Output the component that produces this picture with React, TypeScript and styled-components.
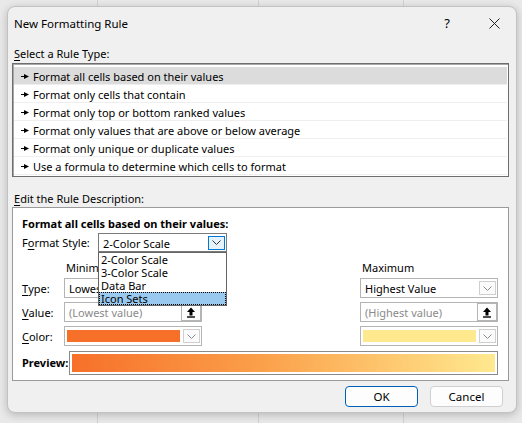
import React from "react";
import styled, { createGlobalStyle } from "styled-components";

const GlobalStyle = createGlobalStyle`
  html, body {
    margin: 0;
    padding: 0;
  }
  body {
    font-family: "Noto Sans", "Open Sans", sans-serif;
    font-size: 11px;
    color: #000;
    background: #e9e9e9;
  }
`;

const Page = styled.div`
  width: 522px;
  height: 423px;
  box-sizing: border-box;
  padding: 6px 5px 10px 7px;
  background-color: #e9e9e9;
  background-image: linear-gradient(#d2d2d2, #d2d2d2), linear-gradient(#d2d2d2, #d2d2d2),
    linear-gradient(#d2d2d2, #d2d2d2);
  background-size: 1px 100%, 1px 100%, 1px 100%;
  background-position: 97px 0, 258px 0, 403px 0;
  background-repeat: no-repeat;
`;

const Dialog = styled.div`
  width: 510px;
  height: 407px;
  box-sizing: border-box;
  background: #f0f0f0;
  border: 1px solid #c2c2c2;
  border-radius: 8px;
  box-shadow: 0 2px 8px rgba(0, 0, 0, 0.22);
  display: flex;
  flex-direction: column;
`;

const TitleBar = styled.div`
  height: 30px;
  display: flex;
  align-items: center;
  padding-left: 6px;
  padding-top: 1px;
`;

const Title = styled.div`
  flex: 1;
  font-size: 11.5px;
`;

const HelpButton = styled.div`
  width: 30px;
  text-align: center;
  font-size: 13px;
  margin-right: 10px;
`;

const CloseButton = styled.div`
  width: 44px;
  height: 30px;
  display: flex;
  align-items: center;
  justify-content: center;
`;

const Body = styled.div`
  flex: 1;
  display: flex;
  flex-direction: column;
  padding: 0 7px 0 4px;
`;

const SectionLabel = styled.div<{ $top: number }>`
  line-height: 16px;
  padding-top: 1px;
  margin-top: ${(p) => p.$top}px;
  padding-left: 2px;
`;

const Key = styled.span`
  text-decoration: underline;
  text-underline-offset: 2px;
`;

const RuleList = styled.div`
  height: 114px;
  box-sizing: border-box;
  background: #fff;
  border: 1px solid #6e6e6e;
  box-shadow: inset 1px 1px 0 #a8a8a8;
  padding: 3px 1px 1px 1px;
  margin-top: 1px;
`;

const RuleRow = styled.div<{ $selected?: boolean }>`
  height: 18px;
  box-sizing: border-box;
  display: flex;
  align-items: center;
  gap: 4px;
  padding: 1px 0 0 7px;
  background: ${(p) => (p.$selected ? "#dcdcdc" : "transparent")};
  border-bottom: 1px solid #efefef;
`;

const DescBox = styled.div`
  height: 174px;
  box-sizing: border-box;
  background: #fff;
  border: 1px solid #9a9a9a;
  padding: 7px 10px 5px 9px;
  display: flex;
  flex-direction: column;
`;

const Heading = styled.div`
  font-weight: 700;
  line-height: 16px;
  padding-top: 1px;
`;

const StyleRow = styled.div`
  display: flex;
  margin-top: 1px;
`;

const InlineLabel = styled.div<{ $width: number; $bold?: boolean }>`
  width: ${(p) => p.$width}px;
  flex-shrink: 0;
  font-weight: ${(p) => (p.$bold ? 700 : 400)};
  line-height: 14px;
  display: flex;
  align-items: center;
  white-space: nowrap;
`;

const SelectWrap = styled.div`
  position: relative;
  width: 129px;
`;

const Field = styled.div<{ $height?: number; $focus?: boolean }>`
  height: ${(p) => p.$height ?? 20}px;
  box-sizing: border-box;
  background: #fff;
  border: 1px solid ${(p) => (p.$focus ? "#7a7a7a" : "#b4b4b4")};
  display: flex;
  align-items: center;
  padding: 1px;
`;

const FieldText = styled.div<{ $muted?: boolean }>`
  flex: 1;
  padding: 1px 0 0 3px;
  color: ${(p) => (p.$muted ? "#8a8a8a" : "#000")};
  white-space: nowrap;
  overflow: hidden;
`;

const ChevronButton = styled.div<{ $active?: boolean }>`
  width: 17px;
  height: 14px;
  box-sizing: border-box;
  border: 1px solid ${(p) => (p.$active ? "#0078d4" : "#cfcfcf")};
  background: ${(p) => (p.$active ? "#e5f1fb" : "#fbfbfb")};
  display: flex;
  align-items: center;
  justify-content: center;
`;

const RefButton = styled.div`
  width: 20px;
  height: 18px;
  margin: -1px -1px -1px 0;
  box-sizing: border-box;
  border: 1px solid #b4b4b4;
  background: #fdfdfd;
  display: flex;
  align-items: center;
  justify-content: center;
`;

const Swatch = styled.div<{ $color: string }>`
  flex: 1;
  align-self: stretch;
  margin: 2px 3px 2px 1px;
  background: ${(p) => p.$color};
`;

const DropList = styled.div`
  position: absolute;
  top: 19px;
  left: 0;
  width: 129px;
  box-sizing: border-box;
  background: #fff;
  border: 1px solid #646464;
  z-index: 2;
`;

const DropItem = styled.div<{ $hot?: boolean }>`
  height: 13px;
  line-height: 13px;
  box-sizing: border-box;
  padding-left: 2px;
  background: ${(p) => (p.$hot ? "#99c9ef" : "transparent")};
  outline: ${(p) => (p.$hot ? "1px dotted #000" : "none")};
  outline-offset: -1px;
`;

const Grid = styled.div`
  display: grid;
  grid-template-columns: 42px 138px 1fr 138px;
  row-gap: 4px;
  margin-top: 8px;
`;

const ColHead = styled.div<{ $col: number }>`
  grid-column: ${(p) => p.$col};
  line-height: 16px;
  padding-left: 2px;
  margin-bottom: -2px;
`;

const RowLabel = styled.div`
  grid-column: 1;
  display: flex;
  align-items: center;
  padding-top: 1px;
`;

const Cell = styled.div<{ $col: number }>`
  grid-column: ${(p) => p.$col};
`;

const PreviewRow = styled.div`
  display: flex;
  margin-top: 5px;
`;

const PreviewBar = styled.div`
  flex: 1;
  height: 24px;
  box-sizing: border-box;
  border: 1px solid #8a8a8a;
  padding: 2px;
  background: #fff;
`;

const Gradient = styled.div`
  height: 100%;
  background: linear-gradient(90deg, #f7702a 0%, #fba04a 45%, #ffe98f 100%);
`;

const Footer = styled.div`
  display: flex;
  justify-content: flex-end;
  gap: 12px;
  margin-top: 5px;
  padding-right: 6px;
`;

const Button = styled.div<{ $default?: boolean }>`
  width: 73px;
  height: 21px;
  box-sizing: border-box;
  border: 1px solid ${(p) => (p.$default ? "#005fb8" : "#d0d0d0")};
  border-radius: 4px;
  background: #fdfdfd;
  display: flex;
  align-items: center;
  justify-content: center;
  font-size: 11.5px;
`;

const RuleArrow = () => (
  <svg width="8" height="7" viewBox="0 0 8 7">
    <path d="M0 3.5h4" stroke="#000" strokeWidth="1" />
    <path d="M3 1l5 2.5L3 6z" fill="#000" />
  </svg>
);

const Chevron = ({ dark }: { dark?: boolean }) => (
  <svg width="9" height="5" viewBox="0 0 9 5">
    <path d="M0.5 0.5l4 4 4-4" fill="none" stroke={dark ? "#333" : "#8a8a8a"} strokeWidth="1" />
  </svg>
);

const UpArrow = () => (
  <svg width="10" height="11" viewBox="0 0 10 11">
    <path d="M5 0.5L9 5H6.5v3.5h-3V5H1z" fill="#000" />
    <path d="M1 10h8" stroke="#000" strokeWidth="1.4" />
  </svg>
);

const CloseIcon = () => (
  <svg width="11" height="11" viewBox="0 0 11 11">
    <path d="M0.5 0.5l10 10M10.5 0.5l-10 10" stroke="#222" strokeWidth="1" />
  </svg>
);

const rules = [
  "Format all cells based on their values",
  "Format only cells that contain",
  "Format only top or bottom ranked values",
  "Format only values that are above or below average",
  "Format only unique or duplicate values",
  "Use a formula to determine which cells to format",
];

const styles = ["2-Color Scale", "3-Color Scale", "Data Bar", "Icon Sets"];

export default function App() {
  return (
    <>
      <GlobalStyle />
      <Page>
        <Dialog>
          <TitleBar>
            <Title>New Formatting Rule</Title>
            <HelpButton>?</HelpButton>
            <CloseButton>
              <CloseIcon />
            </CloseButton>
          </TitleBar>
          <Body>
            <SectionLabel $top={7}>
              <Key>S</Key>elect a Rule Type:
            </SectionLabel>
            <RuleList>
              {rules.map((r, i) => (
                <RuleRow key={r} $selected={i === 0}>
                  <RuleArrow />
                  {r}
                </RuleRow>
              ))}
            </RuleList>
            <SectionLabel $top={13}>
              <Key>E</Key>dit the Rule Description:
            </SectionLabel>
            <DescBox>
              <Heading>Format all cells based on their values:</Heading>
              <StyleRow>
                <InlineLabel $width={76}>
                  F<Key>o</Key>rmat Style:
                </InlineLabel>
                <SelectWrap>
                  <Field $height={19} $focus>
                    <FieldText>2-Color Scale</FieldText>
                    <ChevronButton $active>
                      <Chevron dark />
                    </ChevronButton>
                  </Field>
                  <DropList>
                    {styles.map((s) => (
                      <DropItem key={s} $hot={s === "Icon Sets"}>
                        {s}
                      </DropItem>
                    ))}
                  </DropList>
                </SelectWrap>
              </StyleRow>
              <Grid>
                <ColHead $col={2}>Minimum</ColHead>
                <ColHead $col={4}>Maximum</ColHead>

                <RowLabel>
                  <Key>T</Key>ype:
                </RowLabel>
                <Cell $col={2}>
                  <Field>
                    <FieldText>Lowest Value</FieldText>
                    <ChevronButton>
                      <Chevron />
                    </ChevronButton>
                  </Field>
                </Cell>
                <Cell $col={4}>
                  <Field>
                    <FieldText>Highest Value</FieldText>
                    <ChevronButton>
                      <Chevron />
                    </ChevronButton>
                  </Field>
                </Cell>

                <RowLabel>
                  <Key>V</Key>alue:
                </RowLabel>
                <Cell $col={2}>
                  <Field>
                    <FieldText $muted>(Lowest value)</FieldText>
                    <RefButton>
                      <UpArrow />
                    </RefButton>
                  </Field>
                </Cell>
                <Cell $col={4}>
                  <Field>
                    <FieldText $muted>(Highest value)</FieldText>
                    <RefButton>
                      <UpArrow />
                    </RefButton>
                  </Field>
                </Cell>

                <RowLabel>
                  <Key>C</Key>olor:
                </RowLabel>
                <Cell $col={2}>
                  <Field>
                    <Swatch $color="#f7702a" />
                    <ChevronButton>
                      <Chevron />
                    </ChevronButton>
                  </Field>
                </Cell>
                <Cell $col={4}>
                  <Field>
                    <Swatch $color="#ffe98f" />
                    <ChevronButton>
                      <Chevron />
                    </ChevronButton>
                  </Field>
                </Cell>
              </Grid>
              <PreviewRow>
                <InlineLabel $width={47} $bold>
                  Preview:
                </InlineLabel>
                <PreviewBar>
                  <Gradient />
                </PreviewBar>
              </PreviewRow>
            </DescBox>
            <Footer>
              <Button $default>OK</Button>
              <Button>Cancel</Button>
            </Footer>
          </Body>
        </Dialog>
      </Page>
    </>
  );
}
